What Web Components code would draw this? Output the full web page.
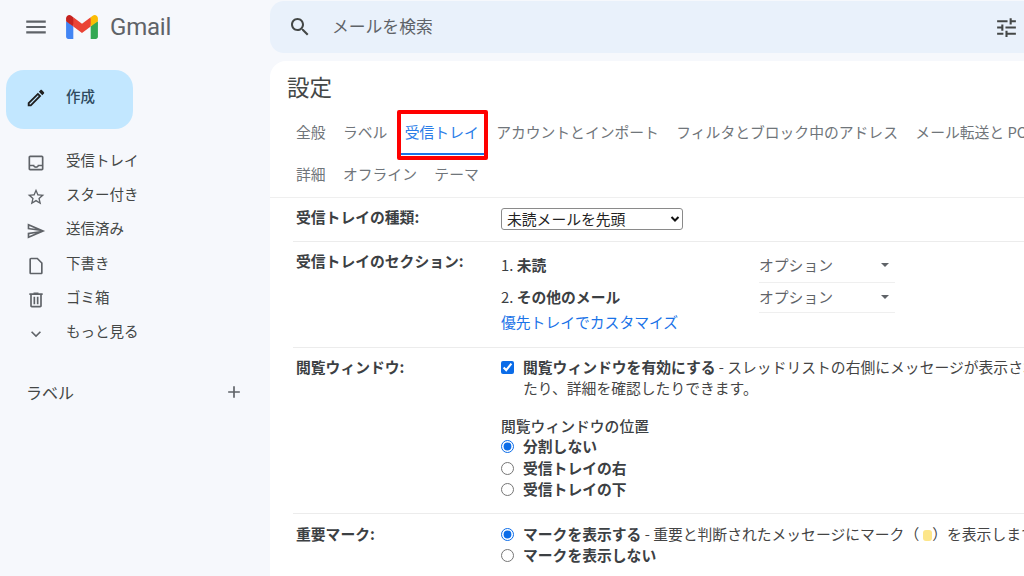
<!DOCTYPE html>
<html lang="ja">
<head>
<meta charset="utf-8">
<title>Gmail 設定</title>
<style>
    html, body {
        margin: 0;
        width: 1024px;
        height: 576px;
        overflow: hidden;
        background: #f6f8fc;
        font-family: "Noto Sans CJK JP", "Noto Sans", sans-serif;
    }
</style>
</head>
<body>
<gm-app>
    <gm-sidebar slot="side">
        <gm-nav-item icon="inbox">受信トレイ</gm-nav-item>
        <gm-nav-item icon="star">スター付き</gm-nav-item>
        <gm-nav-item icon="send">送信済み</gm-nav-item>
        <gm-nav-item icon="draft">下書き</gm-nav-item>
        <gm-nav-item icon="trash">ゴミ箱</gm-nav-item>
        <gm-nav-item icon="more">もっと見る</gm-nav-item>
    </gm-sidebar>
    <gm-search slot="search"></gm-search>
    <gm-settings slot="main">
        <gm-row label="受信トレイの種類:" style="--top:10px;--bottom:11px;--label-top:-2px">
            <gm-select>未読メールを先頭</gm-select>
        </gm-row>
        <gm-row label="受信トレイのセクション:" style="--top:8px;--bottom:14px;--label-top:0px">
            <gm-section-line num="1." name="未読"></gm-section-line>
            <gm-section-line num="2." name="その他のメール"></gm-section-line>
            <gm-link>優先トレイでカスタマイズ</gm-link>
        </gm-row>
        <gm-row label="閲覧ウィンドウ:" style="--top:8.5px;--bottom:12.5px;--label-top:-1px">
            <gm-choice type="checkbox" checked><b>閲覧ウィンドウを有効にする</b> - スレッドリストの右側にメッセージが表示され、返信し<br>たり、詳細を確認したりできます。</gm-choice>
            <gm-heading>閲覧ウィンドウの位置</gm-heading>
            <gm-choice name="pane" checked><b>分割しない</b></gm-choice>
            <gm-choice name="pane"><b>受信トレイの右</b></gm-choice>
            <gm-choice name="pane"><b>受信トレイの下</b></gm-choice>
        </gm-row>
        <gm-row label="重要マーク:" style="--top:9.5px;--bottom:0px;--label-top:-1px">
            <gm-choice name="mark" checked><b>マークを表示する</b> - 重要と判断されたメッセージにマーク（<gm-marker></gm-marker>）を表示します</gm-choice>
            <gm-choice name="mark"><b>マークを表示しない</b></gm-choice>
        </gm-row>
    </gm-settings>
</gm-app>

<script>
const ICONS = {
    menu: "M3 18h18v-2H3v2zm0-5h18v-2H3v2zm0-7v2h18V6H3z",
    search: "M15.5 14h-.79l-.28-.27C15.41 12.59 16 11.11 16 9.5 16 5.91 13.09 3 9.5 3S3 5.91 3 9.5 5.91 16 9.5 16c1.61 0 3.09-.59 4.23-1.57l.27.28v.79l5 4.99L20.49 19l-4.99-5zm-6 0C7.01 14 5 11.99 5 9.5S7.01 5 9.5 5 14 7.01 14 9.5 11.99 14 9.5 14z",
    tune: "M3 17v2h6v-2H3zM3 5v2h10V5H3zm10 16v-2h8v-2h-8v-2h-2v6h2zM7 9v2H3v2h4v2h2V9H7zm14 4v-2H11v2h10zm-6-4h2V7h4V5h-4V3h-2v6z",
    edit: "M14.06 9.02l.92.92L5.92 19H5v-.92l9.06-9.06M17.66 3c-.25 0-.51.1-.7.29l-1.83 1.83 3.75 3.75 1.83-1.83c.39-.39.39-1.02 0-1.41l-2.34-2.34c-.2-.2-.45-.29-.71-.29zm-3.6 3.19L3 17.25V21h3.75L17.81 9.94l-3.75-3.75z",
    inbox: "M19 3H5c-1.1 0-2 .9-2 2v14c0 1.1.9 2 2 2h14c1.1 0 2-.9 2-2V5c0-1.1-.9-2-2-2zm0 16H5v-3h3.56c.69 1.19 1.97 2 3.44 2s2.75-.81 3.44-2H19v3zm0-5h-4.99c0 1.1-.9 2-2 2s-2-.9-2-2H5V5h14v9z",
    star: "M22 9.24l-7.19-.62L12 2 9.19 8.63 2 9.24l5.46 4.73L5.82 21 12 17.27 18.18 21l-1.63-7.03L22 9.24zM12 15.4l-3.76 2.27 1-4.28-3.32-2.88 4.38-.38L12 6.1l1.71 4.04 4.38.38-3.32 2.88 1 4.28L12 15.4z",
    send: "M4.01 6.03l7.51 3.22-7.52-1 .01-2.22m7.5 8.72L4 17.97v-2.22l7.51-1M2.01 3L2 10l15 2-15 2 .01 7L23 12 2.01 3z",
    draft: "M14 2H6c-1.1 0-2 .9-2 2v16c0 1.1.9 2 2 2h12c1.1 0 2-.9 2-2V8l-6-6zm4 18H6V4h7.17L18 8.83V20z",
    trash: "M15 4V3H9v1H4v2h1v13c0 1.1.9 2 2 2h10c1.1 0 2-.9 2-2V6h1V4h-5zm2 15H7V6h10v13zM9 8h2v9H9zm4 0h2v9h-2z",
    more: "M16.59 8.59L12 13.17 7.41 8.59 6 10l6 6 6-6z",
    plus: "M19 13h-6v6h-2v-6H5v-2h6V5h2v6h6v2z"
};

function icon(name, size, color) {
    return `<svg width="${size}" height="${size}" viewBox="0 0 24 24" fill="${color}" fill-rule="${name == "send" ? "evenodd" : "nonzero"}" style="display:block;flex:none"><path d="${ICONS[name]}"/></svg>`;
}

// small helper, every element below is just a shadow root with its own style
class Base extends HTMLElement {
    connectedCallback() {
        if (this.shadowRoot) return;
        this.attachShadow({mode: "open"});
        this.shadowRoot.innerHTML = this.render();
    }
}

class GmApp extends Base {
    render() {
        return /* html */`
        <style>
            :host {
                display: grid;
                grid-template-columns: 270px 754px;
                grid-template-rows: 61px 515px;
                width: 1024px;
                height: 576px;
                overflow: hidden;
            }
            .brand {
                display: flex;
                align-items: center;
                padding: 0 0 7px 23px;
            }
            .logo { margin-left: 17px; }
            .word {
                margin-left: 12px;
                font: 400 24px Roboto, sans-serif;
                letter-spacing: -0.2px;
                color: #5f6368;
            }
            .main { min-width: 0; }
        </style>
        <div class="brand">
            ${icon("menu", 26, "#5f6368")}
            <svg class="logo" width="32" height="24" viewBox="0 0 256 193">
                <path fill="#4285F4" d="M58.182 192.05V93.14L27.507 65.077 0 49.504v125.091c0 9.658 7.825 17.455 17.455 17.455h40.727Z"/>
                <path fill="#34A853" d="M197.818 192.05h40.727c9.659 0 17.455-7.826 17.455-17.455V49.505l-31.156 17.837-27.026 25.798v98.91Z"/>
                <path fill="#EA4335" d="m58.182 93.14-4.174-38.647 4.174-36.989L128 69.868l69.818-52.364 4.67 34.992-4.67 40.644L128 145.504z"/>
                <path fill="#FBBC04" d="M197.818 17.504V93.14L256 49.504V26.231c0-21.585-24.64-33.89-41.89-20.945l-16.292 12.218Z"/>
                <path fill="#C5221F" d="M0 49.504l26.759 20.07L58.182 93.14V17.504L41.89 5.286C24.61-7.66 0 4.646 0 26.23v23.273Z"/>
            </svg>
            <span class="word">Gmail</span>
        </div>
        <slot name="search"></slot>
        <slot name="side"></slot>
        <div class="main"><slot name="main"></slot></div>`;
    }
}

class GmSearch extends Base {
    render() {
        return /* html */`
        <style>
            :host {
                display: flex;
                align-items: center;
                height: 52px;
                margin-top: 1px;
                padding: 0 5px 0 18px;
                background: #e9f1fb;
                border-radius: 14px 0 0 14px;
                color: #5f6368;
                font-size: 16.8px;
            }
            span { margin-left: 20px; margin-top: -2px; flex: 1; }
        </style>
        ${icon("search", 24, "#444746")}
        <span>メールを検索</span>
        ${icon("tune", 25, "#444746")}`;
    }
}

class GmSidebar extends Base {
    render() {
        return /* html */`
        <style>
            :host { display: block; padding-top: 9px; }
            .compose {
                display: flex;
                align-items: center;
                width: 127px;
                height: 59px;
                margin-left: 6px;
                padding-left: 19px;
                box-sizing: border-box;
                background: #c2e7ff;
                border-radius: 18px;
                color: #2e4a60;
                font-size: 14.5px;
                font-weight: 500;
            }
            .compose svg { margin-top: -4px; }
            .compose span { margin-left: 19px; margin-top: -8px; }
            .list { display: block; margin-top: 21.5px; }
            .labels {
                display: flex;
                align-items: center;
                justify-content: space-between;
                margin-top: 23.5px;
                padding: 0 26px 0 26px;
                color: #444746;
                font-size: 16px;
            }
        </style>
        <div class="compose">${icon("edit", 22, "#1f1f1f")}<span>作成</span></div>
        <div class="list"><slot></slot></div>
        <div class="labels"><span>ラベル</span>${icon("plus", 20, "#5f6368")}</div>`;
    }
}

class GmNavItem extends Base {
    render() {
        const name = this.getAttribute("icon");
        return /* html */`
        <style>
            :host {
                display: flex;
                height: 34.4px;
                padding-left: 26px;
                color: #444746;
                font-size: 14.5px;
                line-height: 20px;
            }
            svg { margin-top: 2px; }
            span { margin-left: 20px; margin-top: -1px; }
        </style>
        ${icon(name, 20, "#5f6368")}<span><slot></slot></span>`;
    }
}

class GmSettings extends Base {
    render() {
        return /* html */`
        <style>
            :host {
                display: block;
                height: 515px;
                overflow: hidden;
                background: #fff;
                border-radius: 16px 0 0 0;
            }
            h1 {
                margin: 0;
                padding: 9px 0 0 17px;
                height: 32px;
                font-size: 22.5px;
                line-height: 32px;
                font-weight: 400;
                color: #444746;
            }
            nav {
                position: relative;
                height: 96px;
                box-sizing: border-box;
                padding: 20px 0 0 17.3px;
                border-bottom: 1px solid #efefef;
                font-size: 14.8px;
                line-height: 20px;
                color: #70757a;
                white-space: nowrap;
            }
            .tabs { display: flex; height: 42px; }
            .tabs span { padding: 0 8.7px; }
            .tabs .on { color: #2a7de8; position: relative; height: 26px; }
            .on::after {
                content: "";
                position: absolute;
                left: 4.7px;
                right: 2.5px;
                top: 31px;
                height: 2px;
                background: #1a73e8;
            }
            .mark {
                /* the annotation over the active tab */
                position: absolute;
                left: 127px;
                top: 8px;
                width: 91px;
                height: 50px;
                box-sizing: border-box;
                border: 4px solid #ff0000;
                border-radius: 2px;
            }
        </style>
        <h1>設定</h1>
        <nav>
            <div class="tabs">
                <span>全般</span><span>ラベル</span><span class="on">受信トレイ</span><span>アカウントとインポート</span><span>フィルタとブロック中のアドレス</span><span>メール転送と POP/IMAP</span>
            </div>
            <div class="tabs">
                <span>詳細</span><span>オフライン</span><span>テーマ</span>
            </div>
            <div class="mark"></div>
        </nav>
        <slot></slot>`;
    }
}

class GmRow extends Base {
    render() {
        return /* html */`
        <style>
            :host {
                display: grid;
                grid-template-columns: 205px 1fr;
                margin-left: 23px;
                padding: var(--top) 0 var(--bottom) 3px;
                border-bottom: 1px solid #ececec;
                font-size: 14.8px;
                line-height: 21px;
                color: #444;
                white-space: nowrap;
            }
            :host(:last-child) { border-bottom: none; }
            .label { font-weight: 700; color: #3c4043; margin-top: var(--label-top); }
            .body { min-width: 0; }
        </style>
        <div class="label">${this.getAttribute("label")}</div>
        <div class="body"><slot></slot></div>`;
    }
}

// drawn by hand, a native select cut the tall CJK line at this height
class GmSelect extends Base {
    render() {
        return /* html */`
        <style>
            :host {
                display: flex;
                align-items: center;
                justify-content: space-between;
                width: 182px;
                height: 22px;
                box-sizing: border-box;
                padding: 0 2px 0 5px;
                line-height: 20px;
                color: #222;
                background: #fff;
                border: 1px solid #8a8a8a;
                border-radius: 3px;
            }
            span { margin-top: -1px; }
            svg { display: block; }
        </style>
        <span><slot></slot></span>
        <svg width="10" height="8" viewBox="0 0 10 8"><path d="M1.5 2 5 5.5 8.5 2" fill="none" stroke="#111" stroke-width="2"/></svg>`;
    }
}

class GmSectionLine extends Base {
    render() {
        return /* html */`
        <style>
            :host { display: flex; height: 30px; --text-top: 2.5px; }
            :host(:first-child) { height: 33px; --text-top: 4px; }
            .name { width: 258px; margin-top: var(--text-top); color: #3c4043; }
            b { font-weight: 700; }
            .opt {
                display: flex;
                justify-content: space-between;
                width: 136px;
                box-sizing: border-box;
                padding: var(--text-top) 6px 0 0;
                border-bottom: 1px solid #efefef;
                color: #5f6368;
            }
            i {
                width: 0;
                height: 0;
                margin-top: 9px;
                border: 4px solid transparent;
                border-top: 4px solid #5f6368;
                border-bottom: none;
            }
        </style>
        <div class="name">${this.getAttribute("num")} <b>${this.getAttribute("name")}</b></div>
        <div class="opt"><span>オプション</span><i></i></div>`;
    }
}

class GmLink extends Base {
    render() {
        return /* html */`
        <style>
            :host { display: block; margin-top: -2px; margin-bottom: 1px; color: #1a73e8; }
        </style>
        <slot></slot>`;
    }
}

class GmHeading extends Base {
    render() {
        return /* html */`
        <style>
            :host { display: block; margin-top: 16px; font-weight: 500; color: #3c4043; }
        </style>
        <slot></slot>`;
    }
}

class GmChoice extends Base {
    render() {
        const type = this.getAttribute("type") || "radio";
        const checked = this.hasAttribute("checked") ? "checked" : "";
        const name = this.getAttribute("name") || "";
        return /* html */`
        <style>
            :host { display: flex; align-items: flex-start; line-height: 21.4px; }
            input {
                flex: none;
                width: 13px;
                height: 13px;
                margin: 4px 9px 0 0;
                accent-color: #0b6ce8;
            }
            span { margin-top: -1px; margin-bottom: 1px; }
            ::slotted(b) { font-weight: 700; color: #3c4043; }
        </style>
        <input type="${type}" name="${name}" ${checked}><span><slot></slot></span>`;
    }
}

class GmMarker extends Base {
    render() {
        return /* html */`
        <style>
            :host {
                display: inline-block;
                width: 9px;
                height: 11px;
                margin: 0 0 0 4px;
                vertical-align: -1px;
                background: #fde68a;
                border-radius: 3px;
            }
        </style>`;
    }
}

customElements.define("gm-app", GmApp);
customElements.define("gm-search", GmSearch);
customElements.define("gm-sidebar", GmSidebar);
customElements.define("gm-nav-item", GmNavItem);
customElements.define("gm-settings", GmSettings);
customElements.define("gm-row", GmRow);
customElements.define("gm-select", GmSelect);
customElements.define("gm-section-line", GmSectionLine);
customElements.define("gm-link", GmLink);
customElements.define("gm-heading", GmHeading);
customElements.define("gm-choice", GmChoice);
customElements.define("gm-marker", GmMarker);
</script>
</body>
</html>
